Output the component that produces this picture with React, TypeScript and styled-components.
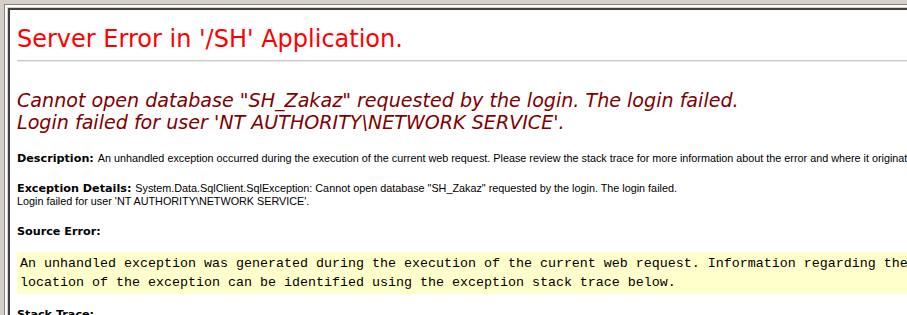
import styled, { createGlobalStyle } from 'styled-components';

const GlobalStyle = createGlobalStyle`
  html, body {
    margin: 0;
    padding: 0;
    background: #d4d0c8;
    overflow: hidden;
  }
`;

const VERDANA = `"DejaVu Sans", Verdana, sans-serif`;
const ARIAL = `"Liberation Sans", Arial, sans-serif`;
const MONO = `"Liberation Mono", "Courier New", monospace`;

const WindowFrame = styled.div`
  width: 907px;
  height: 315px;
  box-sizing: border-box;
  padding: 4px 0 0 4px;
  background: #d4d0c8;
  overflow: hidden;
`;

const SunkenEdge = styled.div`
  height: 100%;
  border-top: 1px solid #808080;
  border-left: 1px solid #808080;
  box-sizing: border-box;
`;

const LightEdge = styled.div`
  height: 100%;
  border-top: 2px solid #ffffff;
  border-left: 2px solid #ffffff;
  box-sizing: border-box;
`;

const InnerEdge = styled.div`
  height: 100%;
  border-top: 1px solid #d4d0c8;
  border-left: 1px solid #d4d0c8;
  box-sizing: border-box;
`;

const DarkEdge = styled.div`
  height: 100%;
  border-top: 2px solid #404040;
  border-left: 2px solid #404040;
  box-sizing: border-box;
  background: #ffffff;
  overflow: hidden;
`;

const Page = styled.div`
  padding: 15px 0 0 7px;
  font-family: ${VERDANA};
  font-size: 11.2px;
  color: #000000;
`;

const Title = styled.h1`
  margin: 0;
  font-family: ${VERDANA};
  font-weight: normal;
  font-size: 24px;
  line-height: 28px;
  color: #ff0000;
  white-space: nowrap;
`;

const Rule = styled.hr`
  margin: 7px 0 0;
  border: 0;
  border-top: 1px solid #c8c8c0;
  border-bottom: 1px solid #ececec;
  height: 0;
`;

const Message = styled.h2`
  margin: 28px 0 0;
  font-family: ${VERDANA};
  font-weight: normal;
  font-style: italic;
  font-size: 19.1px;
  line-height: 22px;
  color: #800000;
  white-space: nowrap;
`;

const Para = styled.p<{ $gap: number }>`
  margin: ${(p) => p.$gap}px 0 0;
  line-height: 12.5px;
  white-space: nowrap;
`;

const Label = styled.b`
  font-family: ${VERDANA};
  font-weight: bold;
`;

const Plain = styled.span`
  font-family: ${ARIAL};
  font-size: 10.8px;
`;

const CodeBox = styled.div`
  margin-top: 14px;
  padding: 2px 3px;
  background: #ffffcc;
  font-family: ${MONO};
  font-size: 13.33px;
  line-height: 19px;
  white-space: pre;
`;

export default function App() {
  return (
    <>
      <GlobalStyle />
      <WindowFrame>
        <SunkenEdge>
          <LightEdge>
            <InnerEdge>
              <DarkEdge>
                <Page>
                  <Title>Server Error in '/SH' Application.</Title>
                  <Rule />
                  <Message>
                    Cannot open database "SH_Zakaz" requested by the login. The login failed.
                    <br />
                    Login failed for user 'NT AUTHORITY\NETWORK SERVICE'.
                  </Message>
                  <Para $gap={18}>
                    <Label>Description: </Label>
                    <Plain>
                      An unhandled exception occurred during the execution of the current web request. Please
                      review the stack trace for more information about the error and where it originated in the
                      code.
                    </Plain>
                  </Para>
                  <Para $gap={16}>
                    <Label>Exception Details: </Label>
                    <Plain>
                      System.Data.SqlClient.SqlException: Cannot open database "SH_Zakaz" requested by the login.
                      The login failed.
                      <br />
                      Login failed for user 'NT AUTHORITY\NETWORK SERVICE'.
                    </Plain>
                  </Para>
                  <Para $gap={17}>
                    <Label>Source Error:</Label>
                  </Para>
                  <CodeBox>
                    {'An unhandled exception was generated during the execution of the current web request. Information regarding the origin and\n'}
                    {'location of the exception can be identified using the exception stack trace below.'}
                  </CodeBox>
                  <Para $gap={15}>
                    <Label>Stack Trace:</Label>
                  </Para>
                </Page>
              </DarkEdge>
            </InnerEdge>
          </LightEdge>
        </SunkenEdge>
      </WindowFrame>
    </>
  );
}
